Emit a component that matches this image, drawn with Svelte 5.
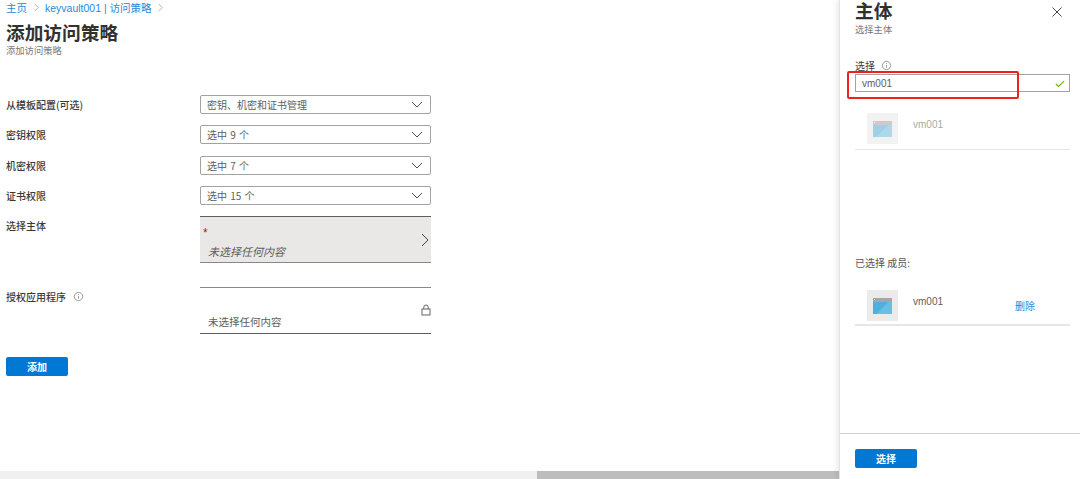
<script>
  const selects = [
    { label: "从模板配置(可选)", value: "密钥、机密和证书管理" },
    { label: "密钥权限", value: "选中 9 个" },
    { label: "机密权限", value: "选中 7 个" },
    { label: "证书权限", value: "选中 15 个" }
  ];
</script>

<div class="page">
  <main class="main">
    <div class="content">
      <nav class="crumbs">
        <a href="#home">主页</a>
        <svg class="crumb-arrow" viewBox="0 0 8 10"><path d="M2 1l4 4-4 4" /></svg>
        <a href="#vault">keyvault001 | 访问策略</a>
        <svg class="crumb-arrow" viewBox="0 0 8 10"><path d="M2 1l4 4-4 4" /></svg>
      </nav>
      <h1>添加访问策略</h1>
      <p class="sub">添加访问策略</p>

      <div class="form">
        {#each selects as s}
          <div class="row">
            <span class="label">{s.label}</span>
            <div class="select">
              <span>{s.value}</span>
              <svg class="chev" viewBox="0 0 12 7"><path d="M1 1l5 5 5-5" /></svg>
            </div>
          </div>
        {/each}

        <div class="row tall principal">
          <span class="label">选择主体</span>
          <div class="picker">
            <span class="req">*</span>
            <em>未选择任何内容</em>
            <svg class="go" viewBox="0 0 8 14"><path d="M1 1l6 6-6 6" /></svg>
          </div>
        </div>

        <div class="row tall app">
          <span class="label">授权应用程序
            <svg class="info" viewBox="0 0 12 12"><circle cx="6" cy="6" r="4.5" /><path d="M6 5.4v3M6 3.4v1" /></svg>
          </span>
          <div class="picker locked">
            <span>未选择任何内容</span>
            <svg class="lock" viewBox="0 0 10 12"><rect x="1" y="5" width="8" height="6" /><path d="M2.8 5V3.2a2.2 2.2 0 0 1 4.4 0V5" /></svg>
          </div>
        </div>
      </div>

      <button class="primary add">添加</button>
    </div>

    <div class="hscroll"><div class="thumb"></div></div>
  </main>

  <aside class="blade">
    <div class="blade-head">
      <div>
        <h2>主体</h2>
        <p class="sub">选择主体</p>
      </div>
      <svg class="close" viewBox="0 0 10 10"><path d="M.5.5l9 9M9.5.5l-9 9" /></svg>
    </div>

    <div class="field-label">选择
      <svg class="info" viewBox="0 0 12 12"><circle cx="6" cy="6" r="4.5" /><path d="M6 5.4v3M6 3.4v1" /></svg>
    </div>
    <div class="search">
      <span>vm001</span>
      <svg class="check" viewBox="0 0 12 9"><path d="M1 4.5l3.2 3L11 1" /></svg>
    </div>

    <div class="member faded">
      <div class="vm-tile">
        <div class="vm-icon"></div>
      </div>
      <span class="name">vm001</span>
    </div>

    <div class="selected-title">已选择 成员:</div>
    <div class="member picked">
      <div class="vm-tile">
        <div class="vm-icon"></div>
      </div>
      <span class="name">vm001</span>
      <a class="remove" href="#remove">删除</a>
    </div>

    <div class="blade-foot">
      <button class="primary">选择</button>
    </div>

    <div class="highlight"></div>
  </aside>
</div>

<style>
  :global(body) { margin: 0; background: #fff; }
  .page {
    display: flex;
    width: 1080px;
    height: 479px;
    overflow: hidden;
    font-family: "Noto Sans CJK SC", "Liberation Sans", sans-serif;
    color: #323130;
    font-size: 10px;
  }
  a { color: #0078d4; text-decoration: none; }
  svg { fill: none; stroke: currentColor; }

  .main { width: 839px; display: flex; flex-direction: column; }
  .content { flex: 1; padding: 0 0 0 6px; }
  .crumbs { display: flex; align-items: center; height: 14px; font-size: 10.5px; gap: 5.5px; }
  .crumbs a { color: #2b88d8; font-family: "Liberation Sans", "Noto Sans CJK SC", sans-serif; }
  .crumb-arrow { width: 7px; height: 9px; color: #a8a6a4; stroke-width: 1; }
  h1, h2, .sub { font-family: "Liberation Sans", "Noto Sans CJK SC", sans-serif; }
  h1 { margin: 9px 0 0; font-size: 18.7px; line-height: 22px; font-weight: 700; color: #323130; }
  .sub { margin: 0; font-size: 9.3px; line-height: 12px; color: #777; }

  .form { margin-top: 38px; }
  .row { display: flex; height: 19px; margin-bottom: 11.3px; }
  .label { width: 194px; flex: none; font-size: 10px; line-height: 19px; font-weight: 500; color: #3b3a39; }
  .select {
    width: 231px;
    height: 19px;
    box-sizing: border-box;
    border: 1px solid #a3a2a0;
    border-radius: 2px;
    padding: 0 7px 0 6px;
    display: flex;
    align-items: center;
    justify-content: space-between;
    color: #605e5c;
    font-size: 10px;
    word-spacing: 1px;
  }
  .chev { width: 12px; height: 7px; color: #505050; stroke-width: 1; }

  .row.tall { height: 47px; margin-bottom: 24px; }
  .principal { margin-top: 1px; }
  .row.app { margin-bottom: 23px; }
  .app .label { display: flex; align-items: center; gap: 7px; height: 19px; margin-top: 0; }
  .picker {
    position: relative;
    width: 231px;
    height: 47px;
    box-sizing: border-box;
    border-top: 1px solid #605e5c;
    border-bottom: 1px solid #8a8886;
    background: #e9e8e6;
    display: flex;
    flex-direction: column;
    justify-content: flex-end;
    padding: 0 0 3px 8px;
    color: #605e5c;
  }
  .picker em { font-size: 11px; line-height: 16px; font-style: italic; }
  .req { position: absolute; left: 3px; top: 9px; color: #a4262c; font-family: "Liberation Sans", sans-serif; font-size: 12px; line-height: 14px; }
  .go { position: absolute; right: 2px; top: 16px; width: 8px; height: 14px; color: #444; stroke-width: 1; }
  .picker.locked { background: #fff; border-top-color: #8a8886; border-bottom-color: #605e5c; padding-bottom: 3px; }
  .picker.locked span { font-size: 10.5px; line-height: 16px; }
  .lock { position: absolute; right: 0; top: 16px; width: 10px; height: 12px; color: #555; stroke-width: .9; }
  .info { width: 11px; height: 11px; color: #777; stroke-width: .8; vertical-align: -2px; }

  .primary {
    display: block;
    width: 62px;
    height: 19px;
    padding: 0;
    border: none;
    border-radius: 2px;
    background: #0078d4;
    color: #fff;
    font-family: inherit;
    font-size: 10px;
    font-weight: 700;
  }
  .add { margin-top: 0; }

  .hscroll { height: 8px; background: #f0f0f0; }
  .thumb { margin-left: 537px; width: 302px; height: 8px; background: #bdbdbd; }

  .blade {
    position: relative;
    width: 241px;
    flex: none;
    box-sizing: border-box;
    padding: 0 10px 0 15px;
    display: flex;
    flex-direction: column;
    background: #fff;
    border-left: 1px solid #e4e4e4;
    box-shadow: -3px 0 5px rgba(0, 0, 0, .07);
  }
  .blade-head { display: flex; justify-content: space-between; align-items: flex-start; height: 36px; }
  h2 { margin: 0; font-size: 18.7px; line-height: 24px; font-weight: 700; }
  .close { width: 10px; height: 10px; margin: 7px 8px 0 0; color: #444; stroke-width: 1; }
  .field-label { margin-top: 21px; height: 17px; line-height: 16px; font-size: 10px; color: #3b3a39; display: flex; align-items: center; gap: 6px; }
  .search {
    height: 18px;
    box-sizing: border-box;
    border: 1px solid #a3a2a0;
    display: flex;
    align-items: center;
    justify-content: space-between;
    padding: 1px 4px 0 6px;
    font-family: "Liberation Sans", sans-serif;
    font-size: 10px;
    color: #605e5c;
  }
  .check { width: 10px; height: 8px; color: #6bb700; stroke-width: 1.3; }

  .member {
    display: flex;
    align-items: flex-start;
    margin-top: 21px;
    height: 36px;
    padding: 0 0 0 12px;
    border-bottom: 1px solid #e6e6e6;
    position: relative;
  }
  .vm-tile {
    width: 31px;
    height: 31px;
    background: #f2f2f2;
    display: flex;
    align-items: center;
    justify-content: center;
  }
  .vm-icon {
    position: relative;
    width: 19px;
    height: 16px;
    background: linear-gradient(135deg, #4fb0dc 50%, #68bfe4 50%);
    border-top: 4px solid #a6a6a6;
    box-sizing: border-box;
  }
  .vm-icon::before {
    content: "";
    position: absolute;
    left: 1px;
    top: -3px;
    width: 1px;
    height: 1px;
    background: #fff;
  }
  .name { margin: 6px 0 0 15px; font-family: "Liberation Sans", sans-serif; font-size: 10px; line-height: 12px; color: #605e5c; }
  .member.faded { margin-top: 21px; }
  .faded .vm-icon { opacity: .5; }
  .faded .name { opacity: .55; }
  .picked { margin-top: 20px; border-bottom-width: 2px; height: 34px; }
  .picked .vm-tile { background: #ebebeb; }
  .remove { position: absolute; left: 160px; top: 9px; font-size: 10px; line-height: 13px; color: #2b88d8; }
  .selected-title { margin-top: 106px; font-size: 10px; line-height: 14px; color: #555; }

  .blade-foot {
    margin: auto -10px 0 -15px;
    height: 46px;
    padding: 15px 0 0 15px;
    box-sizing: border-box;
    border-top: 1px solid #d0d0d0;
  }

  .highlight {
    position: absolute;
    left: 7px;
    top: 71px;
    width: 172px;
    height: 28px;
    box-sizing: border-box;
    border: 2px solid #f0211b;
    border-radius: 2px;
    pointer-events: none;
  }
</style>
